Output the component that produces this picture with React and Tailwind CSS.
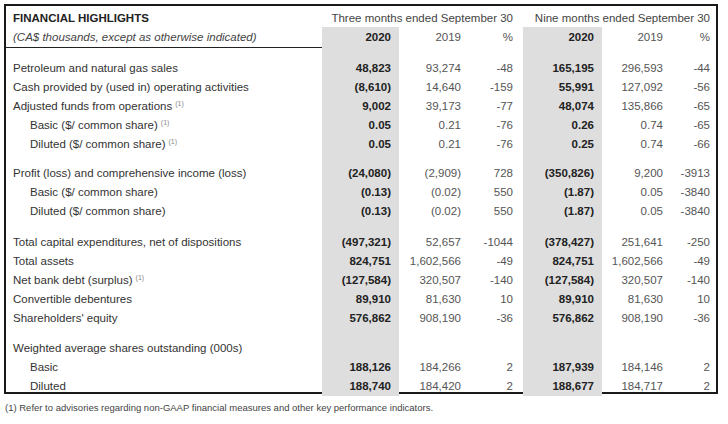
const COLS = "grid grid-cols-[316px_77px_69px_55px_79px_68px_46px]";

const groups = [
  {
    gap: "h-[14px]",
    rows: [
      { label: "Petroleum and natural gas sales", v: ["48,823", "93,274", "-48", "165,195", "296,593", "-44"] },
      { label: "Cash provided by (used in) operating activities", v: ["(8,610)", "14,640", "-159", "55,991", "127,092", "-56"] },
      { label: "Adjusted funds from operations", note: true, v: ["9,002", "39,173", "-77", "48,074", "135,866", "-65"] },
      { label: "Basic ($/ common share)", note: true, sub: true, v: ["0.05", "0.21", "-76", "0.26", "0.74", "-65"] },
      { label: "Diluted ($/ common share)", note: true, sub: true, v: ["0.05", "0.21", "-76", "0.25", "0.74", "-66"] },
    ],
  },
  {
    gap: "h-[10px]",
    rows: [
      { label: "Profit (loss) and comprehensive income (loss)", v: ["(24,080)", "(2,909)", "728", "(350,826)", "9,200", "-3913"] },
      { label: "Basic ($/ common share)", sub: true, v: ["(0.13)", "(0.02)", "550", "(1.87)", "0.05", "-3840"] },
      { label: "Diluted ($/ common share)", sub: true, v: ["(0.13)", "(0.02)", "550", "(1.87)", "0.05", "-3840"] },
    ],
  },
  {
    gap: "h-[12px]",
    rows: [
      { label: "Total capital expenditures, net of dispositions", v: ["(497,321)", "52,657", "-1044", "(378,427)", "251,641", "-250"] },
      { label: "Total assets", v: ["824,751", "1,602,566", "-49", "824,751", "1,602,566", "-49"] },
      { label: "Net bank debt (surplus)", note: true, v: ["(127,584)", "320,507", "-140", "(127,584)", "320,507", "-140"] },
      { label: "Convertible debentures", v: ["89,910", "81,630", "10", "89,910", "81,630", "10"] },
      { label: "Shareholders' equity", v: ["576,862", "908,190", "-36", "576,862", "908,190", "-36"] },
    ],
  },
  {
    gap: "h-[11px]",
    rows: [
      { label: "Weighted average shares outstanding (000s)", v: ["", "", "", "", "", ""] },
      { label: "Basic", sub: true, v: ["188,126", "184,266", "2", "187,939", "184,146", "2"] },
      { label: "Diluted", sub: true, last: true, v: ["188,740", "184,420", "2", "188,677", "184,717", "2"] },
    ],
  },
];

// footnote marker, sits up near cap height like the printed report
function Note() {
  return <span className="inline-block align-top ml-[3px] mt-[2px] text-[7px] leading-[9px] text-[#888]">(1)</span>;
}

function Row({ row }) {
  const h = row.last ? "h-[15px]" : "h-[19px]";
  const [a, b, c, d, e, f] = row.v;
  return (
    <div className={`${COLS} ${h} leading-[19px] text-[11.5px]`}>
      <div className={`${row.sub ? "pl-[24px]" : "pl-[7px]"} text-[#333] whitespace-nowrap`}>
        {row.label}
        {row.note && <Note />}
      </div>
      <div className="bg-[#dedede] text-right pr-[8px] font-bold text-[#222]">{a}</div>
      <div className="text-right pr-[7px] text-[#555]">{b}</div>
      <div className="text-right pr-[10px] text-[#555]">{c}</div>
      <div className="bg-[#dedede] text-right pr-[8px] font-bold text-[#222]">{d}</div>
      <div className="text-right pr-[7px] text-[#555]">{e}</div>
      <div className="text-right pr-[6px] text-[#555]">{f}</div>
    </div>
  );
}

function Gap({ h }) {
  return (
    <div className={`${COLS} ${h}`}>
      <div />
      <div className="bg-[#dedede]" />
      <div />
      <div />
      <div className="bg-[#dedede]" />
      <div />
      <div />
    </div>
  );
}

export default function App() {
  return (
    <div className="w-[728px] h-[424px] bg-white pt-[4px] pl-[4px] font-['Liberation_Sans',Arial,sans-serif]">
      <div className="w-[714px] border-2 border-[#1a1a1a]">
        <div className={`${COLS} h-[21px] text-[11.5px] leading-[24px]`}>
          <div className="pl-[7px] font-bold text-[#222]">FINANCIAL HIGHLIGHTS</div>
          <div className="col-span-3 text-right pr-[10px] text-[#444]">Three months ended September 30</div>
          <div className="col-span-3 text-right pr-[6px] text-[#444]">Nine months ended September 30</div>
        </div>
        <div className={`${COLS} h-[18px] text-[11.5px] leading-[20px]`}>
          <div className="pl-[7px] italic text-[#444] border-b border-[#222]">(CA$ thousands, except as otherwise indicated)</div>
          <div className="bg-[#dedede] text-right pr-[8px] font-bold text-[#222]">2020</div>
          <div className="text-right pr-[7px] text-[#555]">2019</div>
          <div className="text-right pr-[10px] text-[#555]">%</div>
          <div className="bg-[#dedede] text-right pr-[8px] font-bold text-[#222]">2020</div>
          <div className="text-right pr-[7px] text-[#555]">2019</div>
          <div className="text-right pr-[6px] text-[#555]">%</div>
        </div>
        {groups.map((g, i) => (
          <div key={i}>
            <Gap h={g.gap} />
            {g.rows.map((r, j) => (
              <Row key={j} row={r} />
            ))}
          </div>
        ))}
      </div>
      <p className="mt-[8px] pl-[1px] text-[9.5px] leading-[12px] text-[#444]">
        (1) Refer to advisories regarding non-GAAP financial measures and other key performance indicators.
      </p>
    </div>
  );
}
